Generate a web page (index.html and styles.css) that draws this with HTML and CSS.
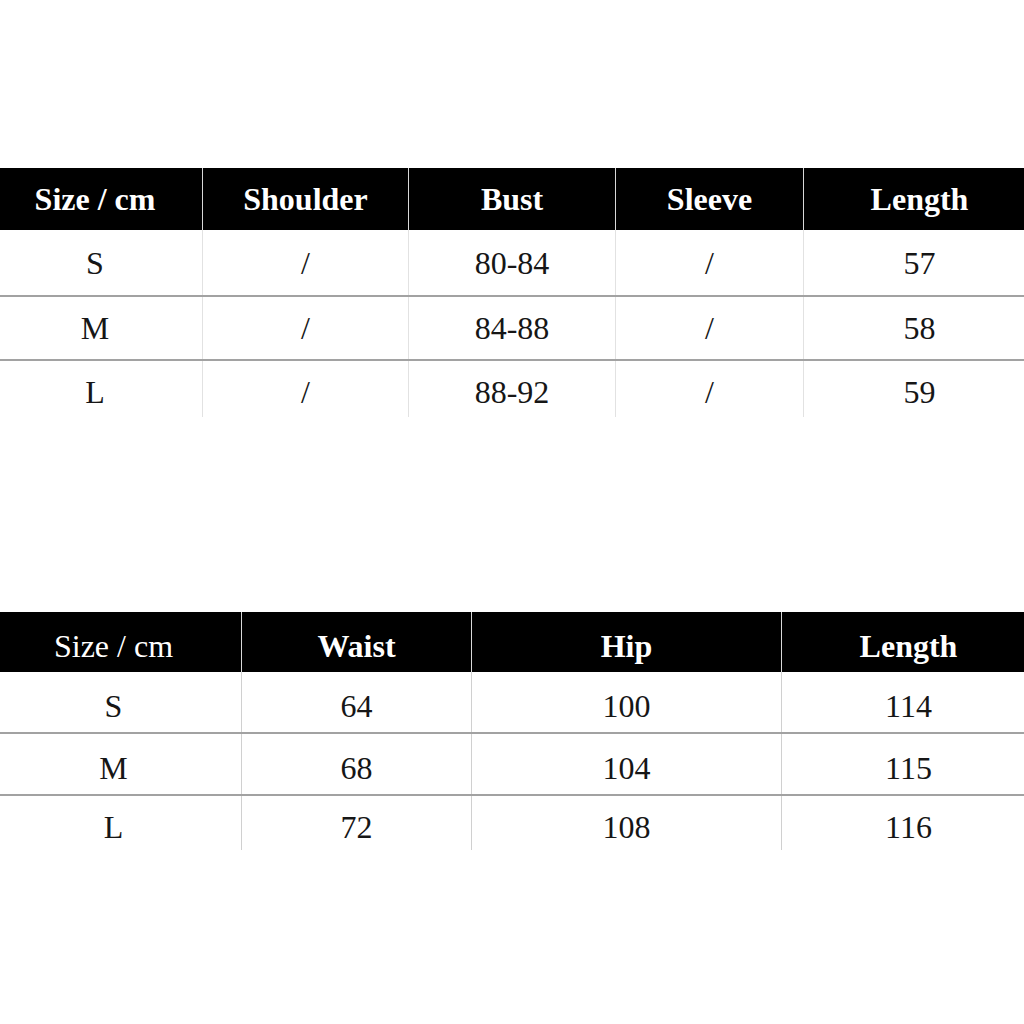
FILE: index.html
```html
<!DOCTYPE html>
<html>
<head>
<meta charset="utf-8">
<link rel="stylesheet" href="styles.css">
</head>
<body>
<div class="sheet">
  <div class="chart chart-top">
    <div class="row head">
      <div class="cell">Size / cm</div>
      <div class="cell">Shoulder</div>
      <div class="cell">Bust</div>
      <div class="cell">Sleeve</div>
      <div class="cell">Length</div>
    </div>
    <div class="row body r1">
      <div class="cell">S</div><div class="cell">/</div><div class="cell">80-84</div><div class="cell">/</div><div class="cell">57</div>
    </div>
    <div class="row body r2">
      <div class="cell">M</div><div class="cell">/</div><div class="cell">84-88</div><div class="cell">/</div><div class="cell">58</div>
    </div>
    <div class="row body r3">
      <div class="cell">L</div><div class="cell">/</div><div class="cell">88-92</div><div class="cell">/</div><div class="cell">59</div>
    </div>
  </div>

  <div class="chart chart-bottom">
    <div class="row head">
      <div class="cell regular">Size / cm</div>
      <div class="cell">Waist</div>
      <div class="cell">Hip</div>
      <div class="cell">Length</div>
    </div>
    <div class="row body r1">
      <div class="cell">S</div><div class="cell">64</div><div class="cell">100</div><div class="cell">114</div>
    </div>
    <div class="row body r2">
      <div class="cell">M</div><div class="cell">68</div><div class="cell">104</div><div class="cell">115</div>
    </div>
    <div class="row body r3">
      <div class="cell">L</div><div class="cell">72</div><div class="cell">108</div><div class="cell">116</div>
    </div>
  </div>
</div>
</body>
</html>
```

FILE: styles.css
```css
html, body {
  margin: 0;
  padding: 0;
  background: #ffffff;
}

body {
  width: 1024px;
  height: 1024px;
  overflow: hidden;
  font-family: "Liberation Serif", "Times New Roman", serif;
  color: #161616;
}

.sheet {
  display: flex;
  flex-direction: column;
}

.chart-top {
  margin-top: 168px;
  margin-left: -12px;
}

.chart-bottom {
  margin-top: 195px;
  margin-left: -14px;
}

.row {
  display: grid;
}

.chart-top .row {
  grid-template-columns: 214px 206px 207px 188px 232px;
}

.chart-bottom .row {
  grid-template-columns: 255px 230px 310px 254px;
}

.cell {
  display: flex;
  align-items: center;
  justify-content: center;
  font-size: 32px;
  line-height: 1;
  border-left: 1px solid #e2e2e2;
}

.cell:first-child {
  border-left: none;
}

.head {
  background: #000000;
  color: #ffffff;
}

.head .cell {
  font-weight: bold;
  border-left: 1px solid #d8d8d8;
}

.head .cell:first-child {
  border-left: none;
}

.head .cell.regular {
  font-weight: normal;
}

.body.r1,
.body.r2 {
  border-bottom: 2px solid #a2a2a2;
}

.chart-top .head { height: 62px; }
.chart-top .r1 { height: 65px; }
.chart-top .r2 { height: 62px; }
.chart-top .r3 { height: 56px; }
.chart-top .r3 .cell { padding-top: 5px; }

.chart-bottom .head { height: 60px; }
.chart-bottom .r1 { height: 60px; }
.chart-bottom .r2 { height: 60px; }
.chart-bottom .r3 { height: 54px; }

.chart-bottom .cell {
  padding-top: 8px;
}

.chart-bottom .body .cell {
  border-left-color: #d0d0d0;
}
```
